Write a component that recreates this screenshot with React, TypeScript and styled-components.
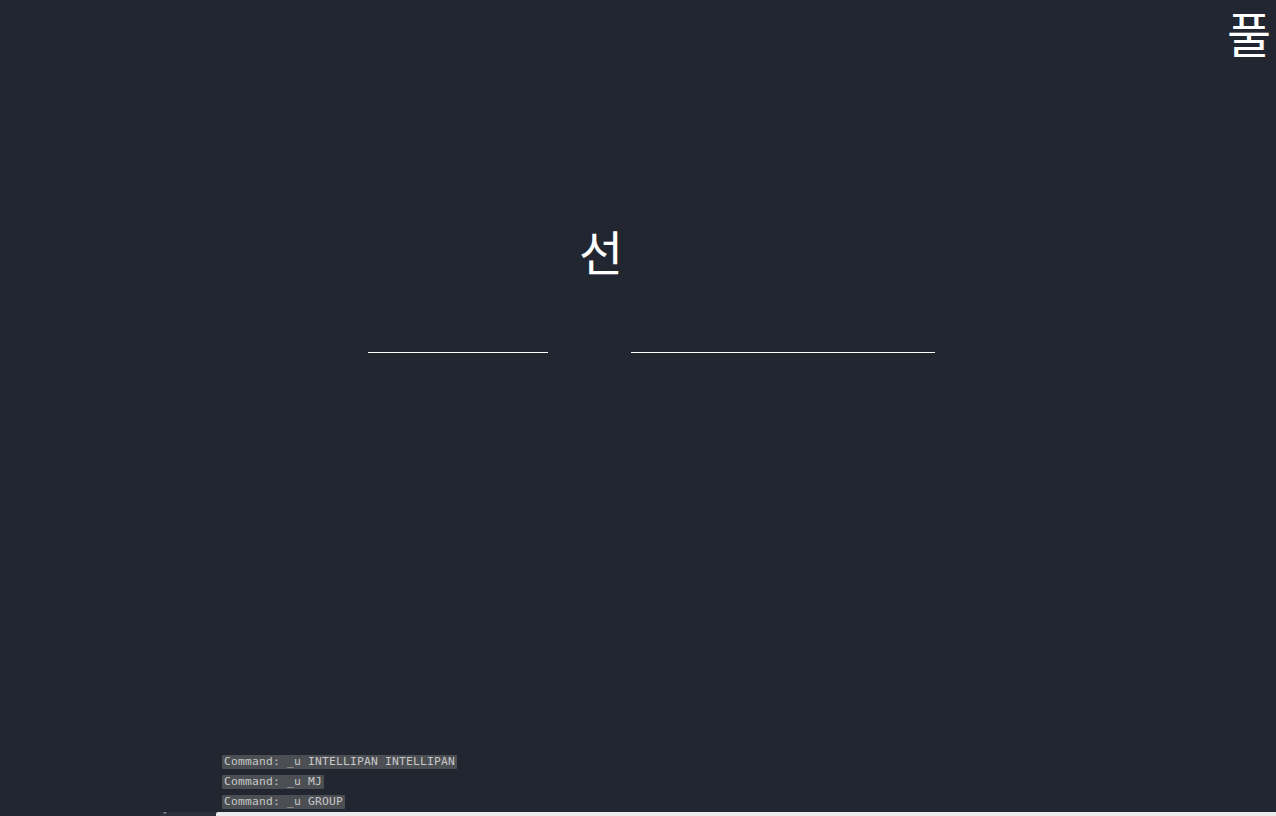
import styled, { createGlobalStyle } from "styled-components";

const GlobalStyle = createGlobalStyle`
	html, body {
		margin: 0;
		padding: 0;
		background: #212630;
		overflow: hidden;
	}
`;

const history = ["Command: _u INTELLIPAN INTELLIPAN", "Command: _u MJ", "Command: _u GROUP"];

// drawing entities on the model space canvas
const texts = [
	{ value: "선", x: 579, y: 219 },
	{ value: "풀", x: 1227, y: 1 },
];

const lines = [
	{ x: 368, y: 352, w: 180 },
	{ x: 631, y: 352, w: 304 },
];

const App = () => {
	return (
		<>
			<GlobalStyle />
			<Viewport>
				<Canvas>
					{texts.map((t) => (
						<CadText key={t.value} style={{ left: t.x, top: t.y }}>
							{t.value}
						</CadText>
					))}
					{lines.map((l, i) => (
						<CadLine key={i} style={{ left: l.x, top: l.y, width: l.w }} />
					))}
				</Canvas>
				<CommandHistory>
					{history.map((h) => (
						<HistoryRow key={h}>{h}</HistoryRow>
					))}
				</CommandHistory>
				<CommandBar>
					<PromptTab>"</PromptTab>
					<CommandInput />
				</CommandBar>
			</Viewport>
		</>
	);
};

const Viewport = styled.div`
	width: 1276px;
	height: 816px;
	background-color: #212630;
	display: flex;
	flex-direction: column;
	overflow: hidden;
`;

const Canvas = styled.div`
	position: relative;
	flex: 1;
`;

const CadText = styled.div`
	position: absolute;
	font-family: "Noto Sans CJK KR", "Noto Sans", sans-serif;
	font-size: 48px;
	line-height: 1.3;
	color: #ffffff;
	white-space: nowrap;
`;

const CadLine = styled.div`
	position: absolute;
	height: 1px;
	background-color: #ffffff;
`;

const CommandHistory = styled.div`
	display: flex;
	flex-direction: column;
	align-items: flex-start;
	gap: 6px;
	padding: 0 0 3px 222px;
`;

const HistoryRow = styled.div`
	font-family: "DejaVu Sans Mono", monospace;
	font-size: 11.3px;
	letter-spacing: 0.2px;
	line-height: 14px;
	height: 14px;
	padding: 0 2px;
	color: #c8c8c8;
	background-color: #4b4e53;
	border-radius: 1px;
	white-space: pre;
`;

const CommandBar = styled.div`
	display: flex;
	height: 4px;
	padding-left: 160px;
	align-items: stretch;
`;

const PromptTab = styled.div`
	width: 56px;
	background-color: #2b303a;
	color: #d0d0d0;
	font-family: "DejaVu Sans", sans-serif;
	font-size: 8px;
	line-height: 8px;
	padding-left: 3px;
	box-sizing: border-box;
	overflow: hidden;
`;

const CommandInput = styled.div`
	flex: 1;
	background-color: #ebebeb;
	border-top-left-radius: 2px;
`;

export default App;
